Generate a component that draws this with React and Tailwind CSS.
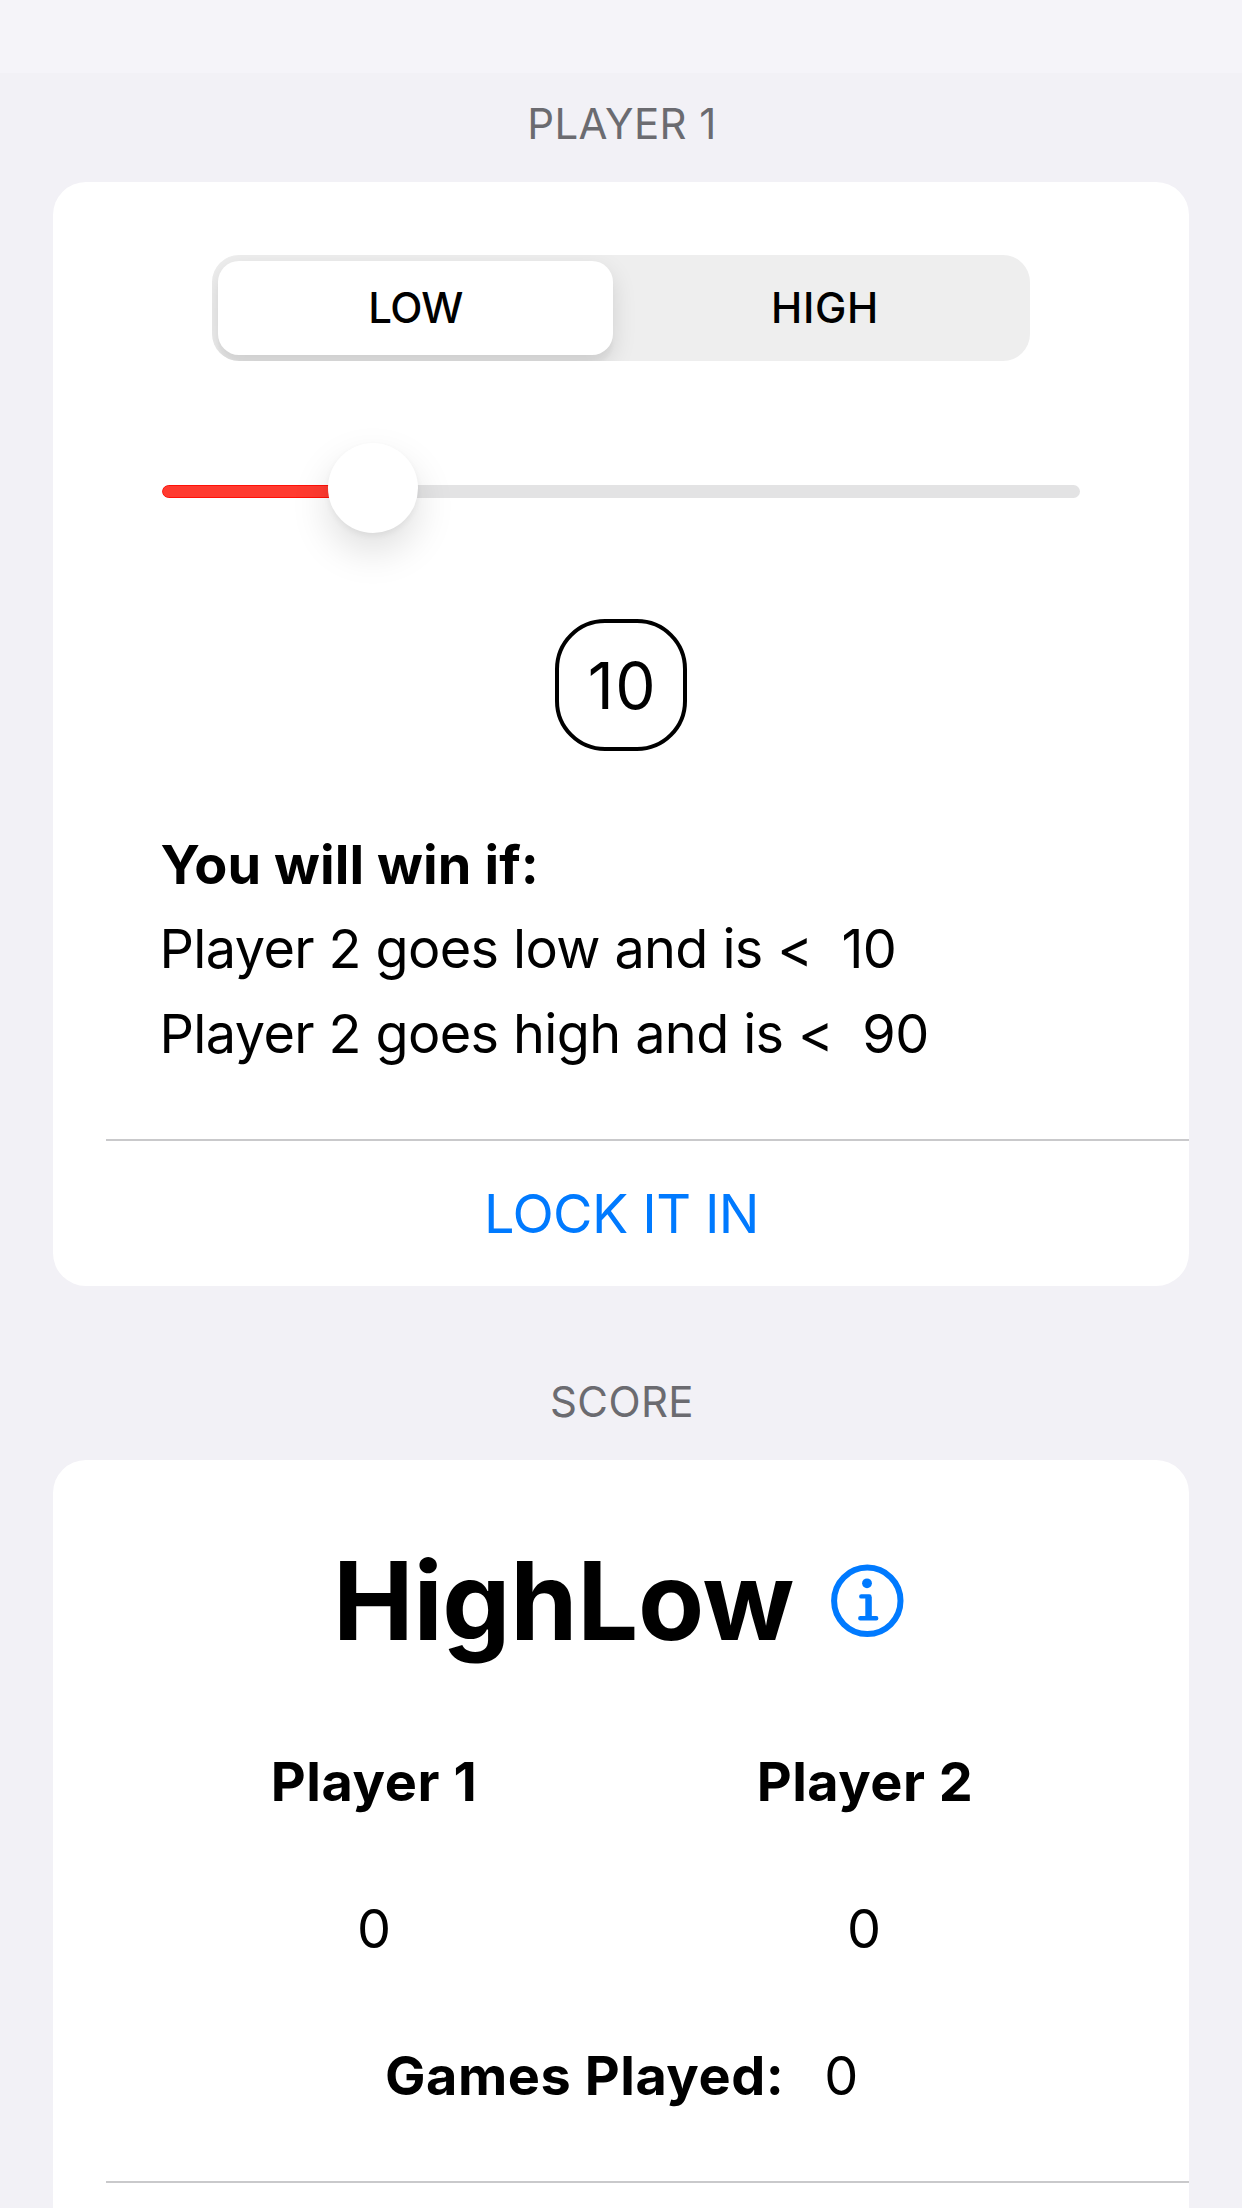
import React from "react";

function SectionLabel({ className, children }) {
  return (
    <h2 className={`flex items-center justify-center pl-[2px] pt-px text-[42px] leading-none text-[#6b6b70] ${className}`}>
      {children}
    </h2>
  );
}

function Divider() {
  return <div className="ml-[53px] h-[2px] shrink-0 bg-[#c9c9cb]" />;
}

function InfoIcon() {
  return (
    <svg width="73" height="73" viewBox="0 0 73 73" fill="none">
      <circle cx="36.3" cy="36.8" r="33.2" stroke="#007aff" strokeWidth="6" />
      <circle cx="36" cy="19.3" r="4.9" fill="#007aff" />
      <path
        d="M30.3 32.4H38.4V54M29.3 54.2H45.2"
        stroke="#007aff"
        strokeWidth="4.4"
        strokeLinecap="round"
        strokeLinejoin="round"
      />
      <path d="M37.4 33V53" stroke="#007aff" strokeWidth="6.2" />
    </svg>
  );
}

function ModePicker() {
  return (
    <div className="mx-auto mt-[73px] flex h-[105.5px] w-[818px] shrink-0 overflow-hidden rounded-[27px] bg-[#eeeeee] p-[6px] text-[42px] font-medium leading-none">
      <button className="flex w-[395px] items-center justify-center rounded-[21px] bg-white tracking-[-0.7px] shadow-[0_9px_24px_rgba(0,0,0,0.12),0_9px_3px_rgba(0,0,0,0.03)]">
        <span>LOW</span>
      </button>
      <button className="ml-[12px] flex flex-1 items-center justify-center tracking-[0.6px]">
        <span className="ml-[1px]">HIGH</span>
      </button>
    </div>
  );
}

function Slider() {
  return (
    <div className="relative ml-[109px] mt-[82.5px] h-[90px] w-[918px] shrink-0 pt-[42px]">
      <div className="h-[13px] overflow-hidden rounded-full bg-[#e3e3e4]">
        <div className="h-full w-[210px] rounded-l-full border border-[#ff1008] bg-[#ff3b30]" />
      </div>
      <div className="absolute left-[165.5px] top-0 size-[90px] rounded-full bg-white shadow-[0_18px_39px_rgba(0,0,0,0.13),0_3px_6px_rgba(0,0,0,0.05)]" />
    </div>
  );
}

function PlayerCard() {
  return (
    <section className="mx-[53px] flex h-[1104px] shrink-0 flex-col rounded-[33px] bg-white">
      <ModePicker />
      <Slider />
      <div className="mx-auto mt-[86px] flex size-[132px] shrink-0 items-center justify-center rounded-[50px] border-4 border-black pl-[3px] pt-px text-[64px] leading-none tracking-[1.6px]">
        10
      </div>
      <div className="ml-[106.5px] mt-[71.5px] whitespace-pre text-[54px] leading-[84.5px] tracking-[-0.62px]">
        <p className="ml-px font-[650] tracking-[0.1px]">You will win if:</p>
        <p>{"Player 2 goes low and is <  10"}</p>
        <p>{"Player 2 goes high and is <  90"}</p>
      </div>
      <div className="mt-auto">
        <Divider />
        <button className="flex h-[145px] w-full items-center justify-center pl-px text-[54px] tracking-[-0.6px] text-[#007aff]">
          LOCK IT IN
        </button>
      </div>
    </section>
  );
}

function ScoreCard() {
  return (
    <section className="mx-[53px] flex h-[800px] shrink-0 flex-col rounded-t-[33px] bg-white">
      <div className="ml-[280px] mt-[75.5px] flex h-[130px] items-center gap-[37px]">
        <h1 className="pt-[2px] text-[108px] font-bold leading-none tracking-[-0.3px]">HighLow</h1>
        <InfoIcon />
      </div>
      <div className="ml-[76px] mt-[76.5px] grid w-[980px] grid-cols-2 gap-y-[67px] text-center text-[54px] leading-[80px]">
        <span className="font-[650] tracking-[0.6px]">Player 1</span>
        <span className="pl-[2px] font-[650] tracking-[0.5px]">Player 2</span>
        <span>0</span>
        <span>0</span>
      </div>
      <div className="ml-[332px] mt-[67px] flex gap-[40px] text-[54px] leading-[80px]">
        <span className="font-[650] tracking-[0.55px]">Games Played:</span>
        <span>0</span>
      </div>
      <div className="mt-[65.5px]">
        <Divider />
      </div>
    </section>
  );
}

export default function App() {
  return (
    <main className="flex h-[2208px] w-[1242px] flex-col overflow-hidden bg-[#f2f1f6] font-[Inter,sans-serif] text-black">
      <div className="h-[73px] shrink-0 bg-[#f5f4f9]" />
      <SectionLabel className="mb-[8px] h-[101px] shrink-0 tracking-[0.45px]">PLAYER 1</SectionLabel>
      <PlayerCard />
      <SectionLabel className="mb-[26.5px] mt-[84px] h-[63px] shrink-0 tracking-[0.4px]">SCORE</SectionLabel>
      <ScoreCard />
    </main>
  );
}
